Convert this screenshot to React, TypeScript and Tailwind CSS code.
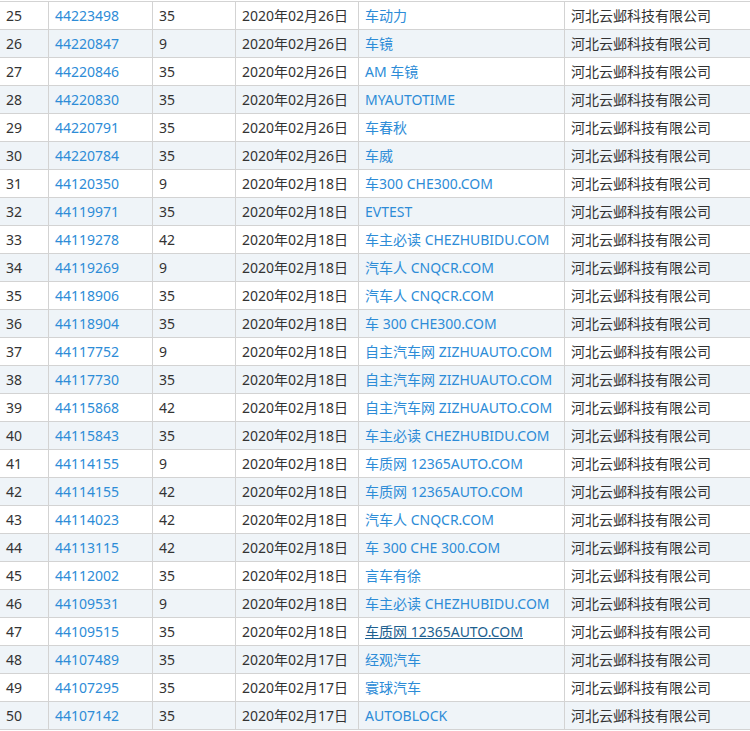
const rows: [number, string, string, string, string, boolean?][] = [
  [25, "44223498", "35", "2020年02月26日", "车动力"],
  [26, "44220847", "9", "2020年02月26日", "车镜"],
  [27, "44220846", "35", "2020年02月26日", "AM 车镜"],
  [28, "44220830", "35", "2020年02月26日", "MYAUTOTIME"],
  [29, "44220791", "35", "2020年02月26日", "车春秋"],
  [30, "44220784", "35", "2020年02月26日", "车威"],
  [31, "44120350", "9", "2020年02月18日", "车300 CHE300.COM"],
  [32, "44119971", "35", "2020年02月18日", "EVTEST"],
  [33, "44119278", "42", "2020年02月18日", "车主必读 CHEZHUBIDU.COM"],
  [34, "44119269", "9", "2020年02月18日", "汽车人 CNQCR.COM"],
  [35, "44118906", "35", "2020年02月18日", "汽车人 CNQCR.COM"],
  [36, "44118904", "35", "2020年02月18日", "车 300 CHE300.COM"],
  [37, "44117752", "9", "2020年02月18日", "自主汽车网 ZIZHUAUTO.COM"],
  [38, "44117730", "35", "2020年02月18日", "自主汽车网 ZIZHUAUTO.COM"],
  [39, "44115868", "42", "2020年02月18日", "自主汽车网 ZIZHUAUTO.COM"],
  [40, "44115843", "35", "2020年02月18日", "车主必读 CHEZHUBIDU.COM"],
  [41, "44114155", "9", "2020年02月18日", "车质网 12365AUTO.COM"],
  [42, "44114155", "42", "2020年02月18日", "车质网 12365AUTO.COM"],
  [43, "44114023", "42", "2020年02月18日", "汽车人 CNQCR.COM"],
  [44, "44113115", "42", "2020年02月18日", "车 300 CHE 300.COM"],
  [45, "44112002", "35", "2020年02月18日", "言车有徐"],
  [46, "44109531", "9", "2020年02月18日", "车主必读 CHEZHUBIDU.COM"],
  [47, "44109515", "35", "2020年02月18日", "车质网 12365AUTO.COM", true],
  [48, "44107489", "35", "2020年02月17日", "经观汽车"],
  [49, "44107295", "35", "2020年02月17日", "寰球汽车"],
  [50, "44107142", "35", "2020年02月17日", "AUTOBLOCK"],
];

const td = "border border-[#d3d3d3] px-[6px] h-[28px] leading-[27px] whitespace-nowrap overflow-hidden";

export default function App() {
  return (
    <div className="w-[750px] h-[731px] overflow-hidden bg-white pt-px text-[14px] text-[#333]" style={{ fontFamily: '"Noto Sans", "Noto Sans CJK SC", sans-serif' }}>
      <table className="border-collapse table-fixed w-[751px] -ml-px">
        <colgroup>
          <col className="w-[49px]" />
          <col className="w-[104px]" />
          <col className="w-[83px]" />
          <col className="w-[123px]" />
          <col className="w-[206px]" />
          <col className="w-[186px]" />
        </colgroup>
        <tbody>
          {rows.map(([n, id, cls, date, name, visited], i) => (
            <tr key={n} className={i % 2 === 1 ? "bg-[#eff4f8]" : "bg-white"}>
              <td className={td}>{n}</td>
              <td className={td + " text-[#2d8cd7]"}>{id}</td>
              <td className={td}>{cls}</td>
              <td className={td}>{date}</td>
              <td className={td + (visited ? " text-[#1d5f8f] underline" : " text-[#2d8cd7]")}>{name}</td>
              <td className={td}>河北云邺科技有限公司</td>
            </tr>
          ))}
        </tbody>
      </table>
    </div>
  );
}
